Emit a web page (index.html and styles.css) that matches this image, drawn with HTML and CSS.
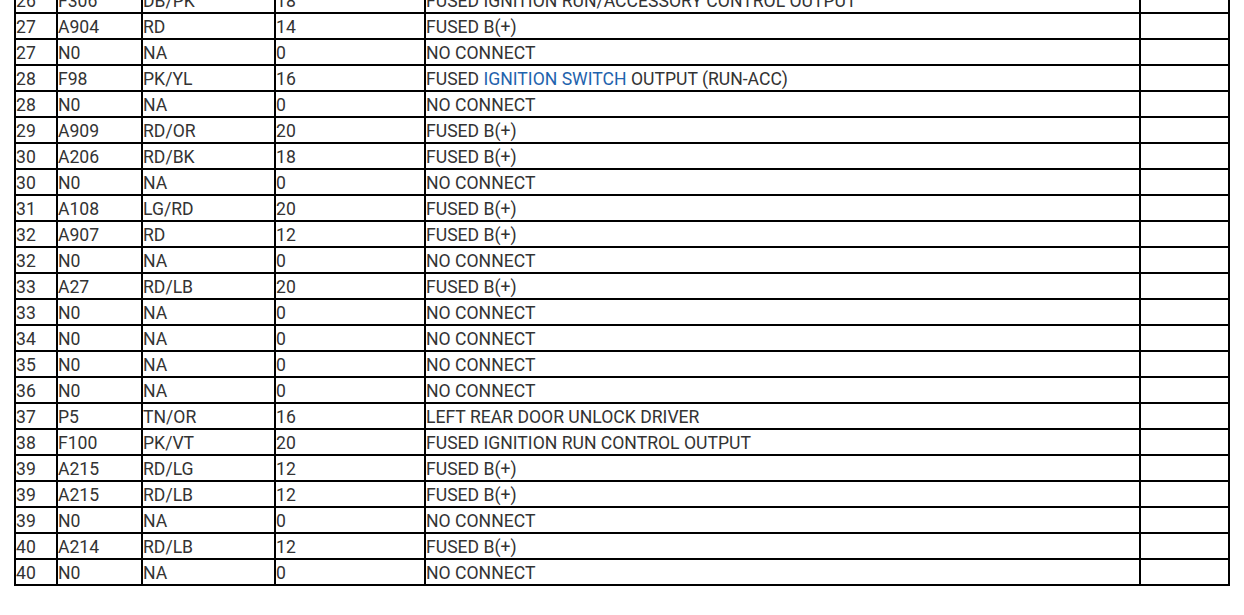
FILE: index.html
```html
<!DOCTYPE html>
<html>
<head>
<meta charset="utf-8">
<link rel="stylesheet" href="styles.css">
</head>
<body>
<div class="page">
<table class="pins">
<colgroup>
<col class="c1"><col class="c2"><col class="c3"><col class="c4"><col class="c5"><col class="c6">
</colgroup>
<tbody>
<tr><td>26</td><td>F306</td><td>DB/PK</td><td>18</td><td>FUSED IGNITION RUN/ACCESSORY CONTROL OUTPUT</td><td></td></tr>
<tr><td>27</td><td>A904</td><td>RD</td><td>14</td><td>FUSED B(+)</td><td></td></tr>
<tr><td>27</td><td>N0</td><td>NA</td><td>0</td><td>NO CONNECT</td><td></td></tr>
<tr><td>28</td><td>F98</td><td>PK/YL</td><td>16</td><td>FUSED <a class="link" href="#">IGNITION SWITCH</a> OUTPUT (RUN-ACC)</td><td></td></tr>
<tr><td>28</td><td>N0</td><td>NA</td><td>0</td><td>NO CONNECT</td><td></td></tr>
<tr><td>29</td><td>A909</td><td>RD/OR</td><td>20</td><td>FUSED B(+)</td><td></td></tr>
<tr><td>30</td><td>A206</td><td>RD/BK</td><td>18</td><td>FUSED B(+)</td><td></td></tr>
<tr><td>30</td><td>N0</td><td>NA</td><td>0</td><td>NO CONNECT</td><td></td></tr>
<tr><td>31</td><td>A108</td><td>LG/RD</td><td>20</td><td>FUSED B(+)</td><td></td></tr>
<tr><td>32</td><td>A907</td><td>RD</td><td>12</td><td>FUSED B(+)</td><td></td></tr>
<tr><td>32</td><td>N0</td><td>NA</td><td>0</td><td>NO CONNECT</td><td></td></tr>
<tr><td>33</td><td>A27</td><td>RD/LB</td><td>20</td><td>FUSED B(+)</td><td></td></tr>
<tr><td>33</td><td>N0</td><td>NA</td><td>0</td><td>NO CONNECT</td><td></td></tr>
<tr><td>34</td><td>N0</td><td>NA</td><td>0</td><td>NO CONNECT</td><td></td></tr>
<tr><td>35</td><td>N0</td><td>NA</td><td>0</td><td>NO CONNECT</td><td></td></tr>
<tr><td>36</td><td>N0</td><td>NA</td><td>0</td><td>NO CONNECT</td><td></td></tr>
<tr><td>37</td><td>P5</td><td>TN/OR</td><td>16</td><td>LEFT REAR DOOR UNLOCK DRIVER</td><td></td></tr>
<tr><td>38</td><td>F100</td><td>PK/VT</td><td>20</td><td>FUSED IGNITION RUN CONTROL OUTPUT</td><td></td></tr>
<tr><td>39</td><td>A215</td><td>RD/LG</td><td>12</td><td>FUSED B(+)</td><td></td></tr>
<tr><td>39</td><td>A215</td><td>RD/LB</td><td>12</td><td>FUSED B(+)</td><td></td></tr>
<tr><td>39</td><td>N0</td><td>NA</td><td>0</td><td>NO CONNECT</td><td></td></tr>
<tr><td>40</td><td>A214</td><td>RD/LB</td><td>12</td><td>FUSED B(+)</td><td></td></tr>
<tr><td>40</td><td>N0</td><td>NA</td><td>0</td><td>NO CONNECT</td><td></td></tr>
</tbody>
</table>
</div>
</body>
</html>
```

FILE: styles.css
```css
html, body {
  margin: 0;
  padding: 0;
  background: #fff;
}

.page {
  margin-top: -14px;
  padding-left: 14px;
  font-family: Roboto, "Liberation Sans", sans-serif;
  font-size: 17.6px;
  color: #333;
}

.pins {
  border-collapse: separate;
  border-spacing: 0;
  border: 1px solid #000;
  width: 1216px;
  table-layout: fixed;
}

.pins td {
  border: 1px solid #000;
  padding: 2px 0 0 0;
  height: 22px;
  line-height: 22px;
  white-space: nowrap;
  overflow: hidden;
  vertical-align: middle;
}

.c1 { width: 42px; }
.c2 { width: 85px; }
.c3 { width: 133px; }
.c4 { width: 150px; }
.c5 { width: 715px; }
.c6 { width: 89px; }

.link {
  color: #1f63ad;
  text-decoration: none;
}
```
